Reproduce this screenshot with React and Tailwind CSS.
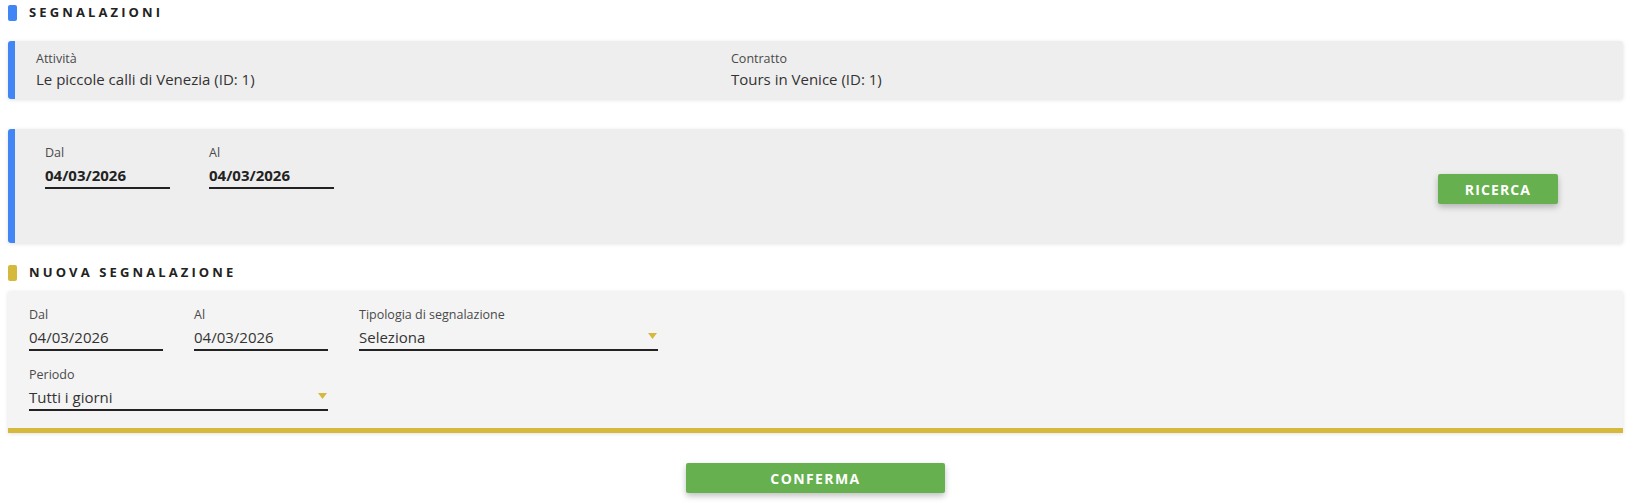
import React from "react";

const font = "font-['Open_Sans','Liberation_Sans',sans-serif]";

const SectionTitle = ({ color, children }) => (
  <div className="flex items-center gap-3 h-[26px]">
    <span className={`w-[9px] h-4 rounded-[2px] ${color}`} />
    <span className="text-[13px] font-bold tracking-[0.24em] text-[#222]">{children}</span>
  </div>
);

const Info = ({ label, value, className = "" }) => (
  <div className={className}>
    <div className="text-[12.5px] leading-[16px] text-[#4a4a4a]">{label}</div>
    <div className="text-[15px] leading-[20px] mt-[2px] text-[#333]">{value}</div>
  </div>
);

const DateField = ({ label, value, bold, width }) => (
  <div className={width}>
    <div className="text-[12.5px] leading-[16px] text-[#4a4a4a]">{label}</div>
    <div
      className={`mt-[4px] pb-[2px] border-b-2 border-[#222] text-[15px] leading-[20px] ${
        bold ? "font-bold text-[#222]" : "text-[#333]"
      }`}
    >
      {value}
    </div>
  </div>
);

const SelectField = ({ label, value, width }) => (
  <div className={width}>
    <div className="text-[12.5px] leading-[16px] text-[#4a4a4a]">{label}</div>
    <div className="mt-[4px] pb-[2px] border-b-2 border-[#222] flex items-center justify-between pr-[1px]">
      <span className="text-[15px] leading-[20px] text-[#333]">{value}</span>
      <svg width="9" height="6" viewBox="0 0 9 6" className="mb-[2px]">
        <path d="M0 0h9L4.5 6z" fill="#d4b93c" />
      </svg>
    </div>
  </div>
);

export default function App() {
  return (
    <div className={`min-h-screen bg-white pl-2 pr-5 ${font}`}>
      <SectionTitle color="bg-[#4285f4]">SEGNALAZIONI</SectionTitle>

      {/* attività / contratto */}
      <div className="mt-[15px] h-[58px] flex items-center pl-[21px] bg-[#eeeeee] border-l-[7px] border-[#4285f4] rounded-[3px] shadow-[0_1px_4px_rgba(0,0,0,0.12)]">
        <Info label="Attività" value="Le piccole calli di Venezia (ID: 1)" className="w-[695px]" />
        <Info label="Contratto" value="Tours in Venice (ID: 1)" />
      </div>

      {/* ricerca */}
      <div className="mt-[30px] h-[114px] flex items-start pl-[30px] pr-[65px] bg-[#eeeeee] border-l-[7px] border-[#4285f4] rounded-[3px] shadow-[0_1px_4px_rgba(0,0,0,0.12)]">
        <div className="flex gap-[39px] pt-[16px]">
          <DateField label="Dal" value="04/03/2026" bold width="w-[125px]" />
          <DateField label="Al" value="04/03/2026" bold width="w-[125px]" />
        </div>
        <div className="flex-1" />
        <button className="self-center mt-[6px] w-[120px] h-[30px] rounded-[2px] bg-[#66b04f] text-white text-[14px] font-bold tracking-[0.08em] shadow-[0_3px_6px_rgba(0,0,0,0.25)]">
          RICERCA
        </button>
      </div>

      <div className="mt-[17px]">
        <SectionTitle color="bg-[#d4b93c]">NUOVA SEGNALAZIONE</SectionTitle>
      </div>

      {/* nuova segnalazione */}
      <div className="mt-[5px] pl-[21px] pt-[16px] pb-[17px] bg-[#f4f4f4] border-b-[5px] border-[#d4b93c] rounded-t-[3px] shadow-[0_1px_4px_rgba(0,0,0,0.12)]">
        <div className="flex gap-[31px]">
          <DateField label="Dal" value="04/03/2026" width="w-[134px]" />
          <DateField label="Al" value="04/03/2026" width="w-[134px]" />
          <SelectField label="Tipologia di segnalazione" value="Seleziona" width="w-[299px]" />
        </div>
        <div className="mt-[16px]">
          <SelectField label="Periodo" value="Tutti i giorni" width="w-[299px]" />
        </div>
      </div>

      <div className="flex justify-center mt-[30px]">
        <button className="w-[259px] h-[30px] rounded-[2px] bg-[#66b04f] text-white text-[14px] font-bold tracking-[0.1em] shadow-[0_3px_6px_rgba(0,0,0,0.25)]">
          CONFERMA
        </button>
      </div>
    </div>
  );
}
